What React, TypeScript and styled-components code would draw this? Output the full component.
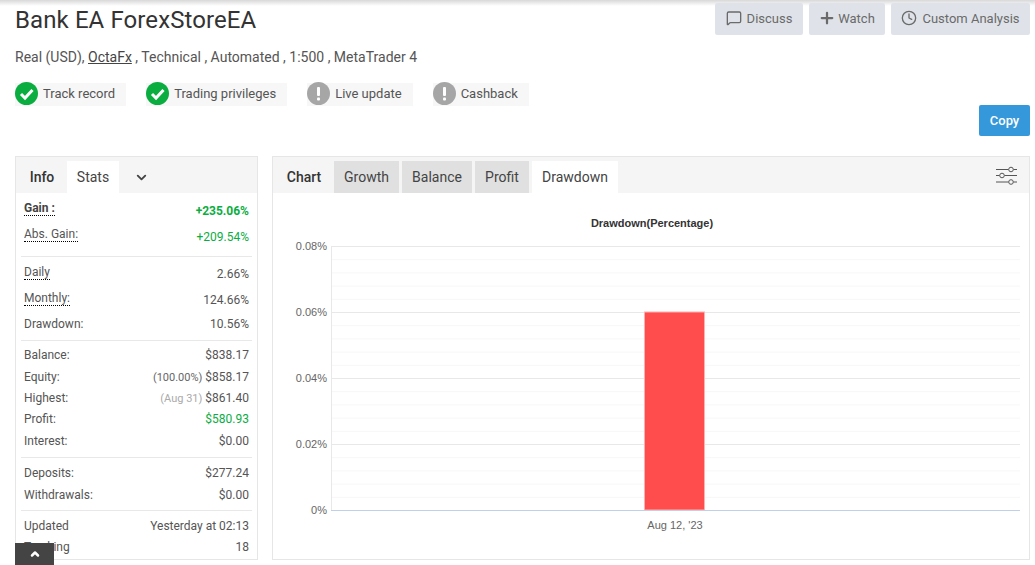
import { ReactNode } from 'react';
import styled, { createGlobalStyle } from 'styled-components';
import { ChevronDown, ChevronUp, Clock, MessageSquare, Plus } from 'lucide-react';

const GlobalStyle = createGlobalStyle`
  html, body {
    margin: 0;
    height: 100%;
    overflow: hidden;
    background: #fff;
    font-family: Roboto, "Liberation Sans", sans-serif;
  }
`;

const Page = styled.main`
  position: relative;
  width: 1035px;
  height: 565px;
  box-sizing: border-box;
  padding: 3px 5px 0 15px;
  overflow: hidden;
  &::before {
    content: '';
    position: absolute;
    top: 0;
    left: 0;
    right: 0;
    height: 6px;
    background: linear-gradient(#d8d8d8, #fff);
  }
`;
const Header = styled.header`
  position: relative;
  display: flex;
  justify-content: space-between;
  align-items: flex-start;
`;
const Title = styled.h1`
  margin: 1px 0 0;
  font-size: 24px;
  font-weight: 400;
  line-height: 32px;
  letter-spacing: 0.1px;
  color: #333;
`;
const Actions = styled.div`
  display: flex;
  gap: 6px;
`;
const ActionButton = styled.button<{ $width: number }>`
  display: flex;
  align-items: center;
  justify-content: center;
  gap: 5px;
  box-sizing: border-box;
  width: ${(p) => p.$width}px;
  height: 32px;
  padding: 0 0 2px;
  border: 0;
  border-radius: 2px;
  background: #dfe3e9;
  color: #6a6a6a;
  font: 400 13px Roboto, sans-serif;
`;
const PlusIcon = styled(Plus)`
  margin: 0 -3px 0 -1px;
`;
const Subtitle = styled.p`
  margin: 11px 0 0;
  font-size: 14px;
  line-height: 20px;
  color: #555;
  a {
    color: #444;
    text-decoration: underline;
  }
`;
const Badges = styled.div`
  display: flex;
  gap: 20px;
  margin-top: 15px;
`;
const Badge = styled.div`
  display: flex;
  align-items: center;
  box-sizing: border-box;
  height: 24px;
  gap: 5px;
  padding: 0 11px 1px 0;
  background: linear-gradient(#fff 1px, #f7f7f7 1px);
  font-size: 13px;
  color: #555;
`;
const CopyRow = styled.div`
  display: flex;
  justify-content: flex-end;
  margin-top: -1px;
`;
const CopyButton = styled.button`
  width: 51px;
  height: 31px;
  border: 0;
  border-radius: 2px;
  background: #3498db;
  color: #fff;
  font: 500 13px Roboto, sans-serif;
`;
const Panels = styled.div`
  display: flex;
  gap: 14px;
  margin-top: 20px;
`;
const Panel = styled.section<{ $width: number }>`
  width: ${(p) => p.$width}px;
  height: 404px;
  box-sizing: border-box;
  border: 1px solid #e6e6e6;
  overflow: hidden;
`;
const TabBar = styled.div`
  display: flex;
  align-items: flex-end;
  height: 36px;
  background: #f5f5f5;
`;
const Tab = styled.div<{ $kind: 'label' | 'off' | 'on'; $width: number }>`
  display: flex;
  align-items: center;
  justify-content: center;
  box-sizing: border-box;
  width: ${(p) => p.$width}px;
  height: 32px;
  margin-right: ${(p) => (p.$kind === 'label' ? 0 : 3)}px;
  padding-left: ${(p) => (p.$kind === 'label' ? 1 : 0)}px;
  font-size: 14px;
  font-weight: ${(p) => (p.$kind === 'label' ? 500 : 400)};
  color: ${(p) => (p.$kind === 'label' ? '#333' : '#444')};
  background: ${(p) =>
    p.$kind === 'on' ? '#fff' : p.$kind === 'off' ? '#e0e0e0' : 'transparent'};
`;
const MoreTab = styled.div`
  display: flex;
  justify-content: center;
  align-items: center;
  width: 38px;
  height: 32px;
  color: #444;
`;
const SettingsIcon = styled.svg`
  margin: 0 12px 7px auto;
`;
const Group = styled.div<{ $top: number; $bottom: number; $last?: boolean }>`
  margin: 0 5px;
  padding: ${(p) => p.$top}px 3px ${(p) => p.$bottom}px;
  border-bottom: ${(p) => (p.$last ? 'none' : '1px solid #e8e8e8')};
`;
const Row = styled.div<{ $height: number }>`
  display: flex;
  justify-content: space-between;
  align-items: center;
  height: ${(p) => p.$height}px;
  font-size: 12px;
  color: #555;
`;
const Label = styled.span<{ $hint?: boolean; $strong?: boolean; $lift?: number }>`
  margin-bottom: ${(p) => p.$lift || 0}px;
  font-weight: ${(p) => (p.$strong ? 700 : 400)};
  color: ${(p) => (p.$strong ? '#444' : '#555')};
  border-bottom: ${(p) => (p.$hint ? '1px dotted #000' : 'none')};
`;
const Value = styled.span<{ $green?: boolean; $strong?: boolean }>`
  font-weight: ${(p) => (p.$strong ? 700 : 400)};
  color: ${(p) => (p.$green ? '#0aad3f' : '#555')};
`;
const Aside = styled.span<{ $muted?: boolean }>`
  font-size: 11px;
  margin-right: 3px;
  color: ${(p) => (p.$muted ? '#aaa' : '#666')};
`;
const BackToTop = styled.div`
  position: fixed;
  left: 15px;
  bottom: 0;
  width: 39px;
  height: 22px;
  display: flex;
  align-items: center;
  justify-content: center;
  background: #444;
  color: #fff;
`;
const ChartSvg = styled.svg`
  display: block;
  text {
    font-family: "Liberation Sans", Arial, sans-serif;
    font-size: 11px;
    fill: #666;
  }
  text.title {
    font-weight: 700;
    fill: #333;
  }
`;

function CheckBadge({ ok, children }: { ok: boolean; children: ReactNode }) {
  return (
    <Badge>
      <svg width="23" height="23" viewBox="0 0 23 23">
        <circle cx="11.5" cy="11.5" r="11.5" fill={ok ? '#0aad3f' : '#a6a6a6'} />
        {ok ? (
          <path d="M6 12l4 4 7.5-8" fill="none" stroke="#fff" strokeWidth="3" />
        ) : (
          <>
            <rect x="10" y="5" width="3" height="9" rx="1" fill="#fff" />
            <rect x="10" y="15.5" width="3" height="3" rx="1" fill="#fff" />
          </>
        )}
      </svg>
      {children}
    </Badge>
  );
}

// chart coords are relative to the panel body
const PLOT_LEFT = 58;
const PLOT_RIGHT = 747;
const BASE_Y = 317;
const STEP = 66;
const yLabels = ['0%', '0.02%', '0.04%', '0.06%', '0.08%'];

function DrawdownChart() {
  const minor = Array.from({ length: 21 }, (_, i) => BASE_Y - i * (STEP / 5));
  return (
    <ChartSvg width="756" height="366" viewBox="0 0 756 366">
      <text className="title" x="379" y="34" textAnchor="middle">
        Drawdown(Percentage)
      </text>
      {minor.map((y, i) =>
        i % 5 === 0 ? null : (
          <line key={i} x1={PLOT_LEFT} x2={PLOT_RIGHT} y1={y + 0.5} y2={y + 0.5} stroke="#f7f7f7" />
        ),
      )}
      {yLabels.map((label, i) => {
        const y = BASE_Y - i * STEP;
        return (
          <g key={label}>
            {i > 0 && (
              <line x1={PLOT_LEFT} x2={PLOT_RIGHT} y1={y + 0.5} y2={y + 0.5} stroke="#e8e8e8" />
            )}
            <text x="54" y={y + 4} textAnchor="end">
              {label}
            </text>
          </g>
        );
      })}
      <line x1={PLOT_LEFT + 0.5} x2={PLOT_LEFT + 0.5} y1={BASE_Y - 264} y2={BASE_Y} stroke="#e8e8e8" />
      <rect x="371.5" y={BASE_Y - 198} width="60" height="198" fill="#ff4d4d" stroke="#ffb0b0" />
      <line x1={PLOT_LEFT} x2={PLOT_RIGHT} y1={BASE_Y + 0.5} y2={BASE_Y + 0.5} stroke="#c0d0e8" />
      <text x="402" y="336" textAnchor="middle">
        Aug 12, '23
      </text>
    </ChartSvg>
  );
}

function App(): JSX.Element {
  return (
    <Page>
      <GlobalStyle />
      <Header>
        <Title>Bank EA ForexStoreEA</Title>
        <Actions>
          <ActionButton $width={88}>
            <MessageSquare size={16} />
            Discuss
          </ActionButton>
          <ActionButton $width={76}>
            <PlusIcon size={18} strokeWidth={3} />
            Watch
          </ActionButton>
          <ActionButton $width={139}>
            <Clock size={16} />
            Custom Analysis
          </ActionButton>
        </Actions>
      </Header>
      <Subtitle>
        Real (USD), <a>OctaFx</a> , Technical , Automated , 1:500 , MetaTrader 4
      </Subtitle>
      <Badges>
        <CheckBadge ok>Track record</CheckBadge>
        <CheckBadge ok>Trading privileges</CheckBadge>
        <CheckBadge ok={false}>Live update</CheckBadge>
        <CheckBadge ok={false}>Cashback</CheckBadge>
      </Badges>
      <CopyRow>
        <CopyButton>Copy</CopyButton>
      </CopyRow>
      <Panels>
        <Panel $width={243}>
          <TabBar>
            <Tab $kind="label" $width={51}>Info</Tab>
            <Tab $kind="on" $width={52}>Stats</Tab>
            <MoreTab>
              <ChevronDown size={15} strokeWidth={3} />
            </MoreTab>
          </TabBar>
          <Group $top={5} $bottom={6}>
            <Row $height={26}>
              <Label $hint $strong $lift={5}>Gain :</Label>
              <Value $green $strong>+235.06%</Value>
            </Row>
            <Row $height={26}>
              <Label $hint $lift={5}>Abs. Gain:</Label>
              <Value $green>+209.54%</Value>
            </Row>
          </Group>
          <Group $top={4} $bottom={5}>
            <Row $height={26}>
              <Label $hint $lift={3}>Daily</Label>
              <Value>2.66%</Value>
            </Row>
            <Row $height={26}>
              <Label $hint $lift={3}>Monthly:</Label>
              <Value>124.66%</Value>
            </Row>
            <Row $height={22}>
              <Label>Drawdown:</Label>
              <Value>10.56%</Value>
            </Row>
          </Group>
          <Group $top={3} $bottom={5}>
            <Row $height={22}>
              <Label>Balance:</Label>
              <Value>$838.17</Value>
            </Row>
            <Row $height={22}>
              <Label>Equity:</Label>
              <Value><Aside>(100.00%)</Aside>$858.17</Value>
            </Row>
            <Row $height={20}>
              <Label>Highest:</Label>
              <Value><Aside $muted>(Aug 31)</Aside>$861.40</Value>
            </Row>
            <Row $height={22}>
              <Label>Profit:</Label>
              <Value $green>$580.93</Value>
            </Row>
            <Row $height={22}>
              <Label>Interest:</Label>
              <Value>$0.00</Value>
            </Row>
          </Group>
          <Group $top={4} $bottom={4}>
            <Row $height={22}>
              <Label>Deposits:</Label>
              <Value>$277.24</Value>
            </Row>
            <Row $height={22}>
              <Label>Withdrawals:</Label>
              <Value>$0.00</Value>
            </Row>
          </Group>
          <Group $top={4} $bottom={0} $last>
            <Row $height={22}>
              <Label>Updated</Label>
              <Value>Yesterday at 02:13</Value>
            </Row>
            <Row $height={20}>
              <Label>Tracking</Label>
              <Value>18</Value>
            </Row>
          </Group>
        </Panel>
        <Panel $width={758}>
          <TabBar>
            <Tab $kind="label" $width={61}>Chart</Tab>
            <Tab $kind="off" $width={65}>Growth</Tab>
            <Tab $kind="off" $width={70}>Balance</Tab>
            <Tab $kind="off" $width={54}>Profit</Tab>
            <Tab $kind="on" $width={86}>Drawdown</Tab>
            <SettingsIcon width="21" height="20" viewBox="0 0 21 20" fill="none" stroke="#555">
              <path d="M0 3.5h12.5M17.5 3.5h3.5M0 9.5h3.5M8.5 9.5h12.5M0 16h12.5M17.5 16h3.5" />
              <circle cx="15" cy="3.5" r="2.3" />
              <circle cx="6" cy="9.5" r="2.3" />
              <circle cx="15" cy="16" r="2.3" />
            </SettingsIcon>
          </TabBar>
          <DrawdownChart />
        </Panel>
      </Panels>
      <BackToTop>
        <ChevronUp size={12} strokeWidth={5} />
      </BackToTop>
    </Page>
  );
}

export default App;
